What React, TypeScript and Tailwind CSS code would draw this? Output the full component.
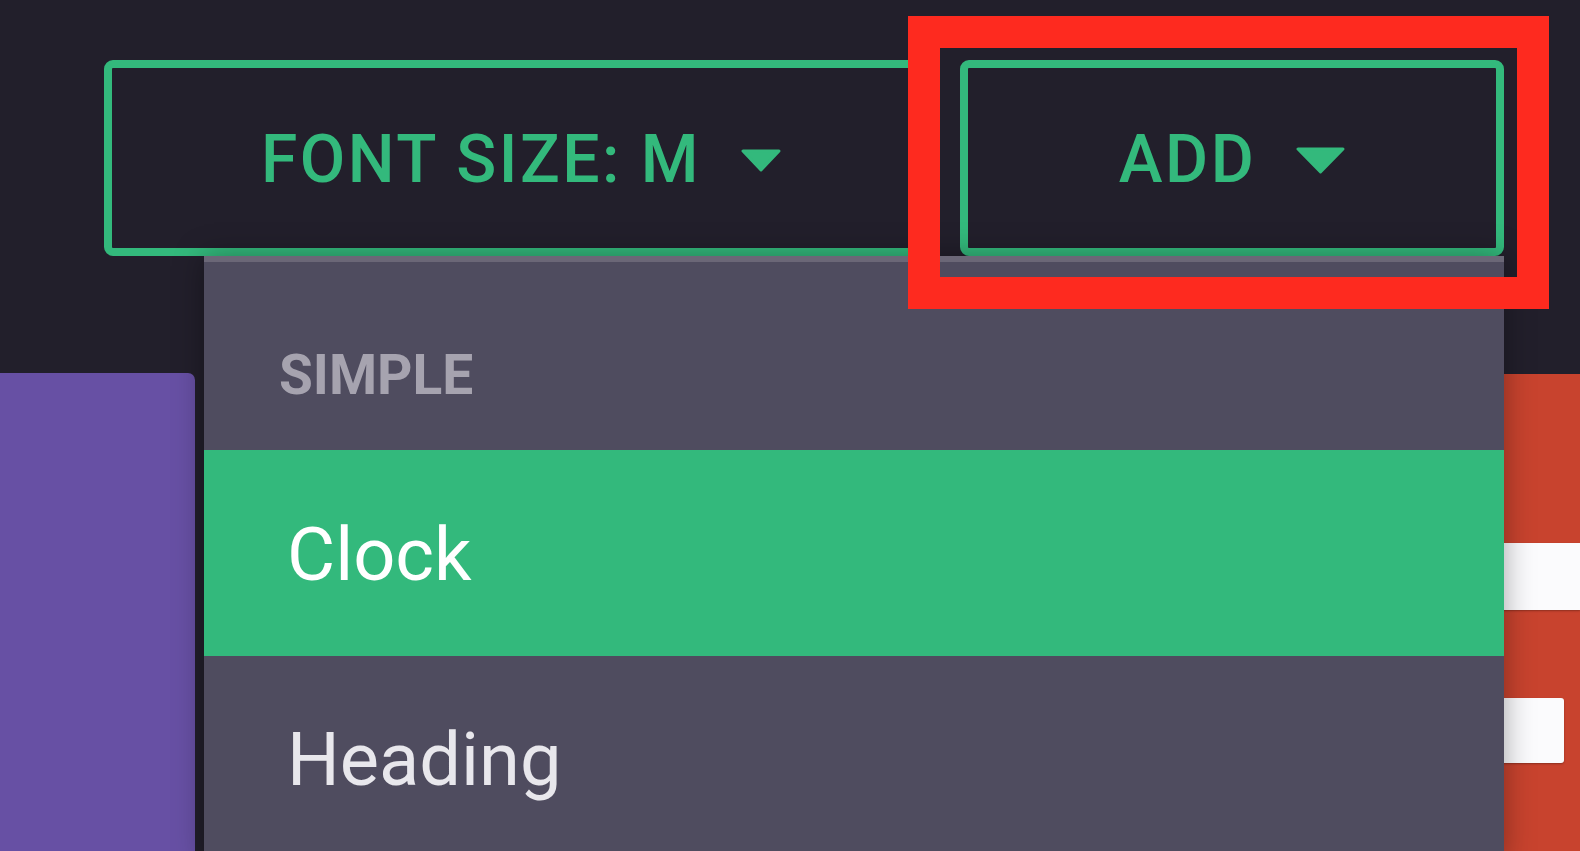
import React from "react";

function Caret({ w, h }: { w: number; h: number }) {
  return (
    <svg width={w} height={h} viewBox={`0 0 ${w} ${h}`} className="shrink-0">
      <polygon
        points={`2,2 ${w - 2},2 ${w / 2},${h - 2}`}
        fill="#33b97c"
        stroke="#33b97c"
        strokeWidth="3"
        strokeLinejoin="round"
      />
    </svg>
  );
}

function ToolbarButton({ label, width, caret }: { label: string; width: string; caret: [number, number] }) {
  return (
    <button
      className={`${width} h-[196px] shrink-0 flex items-center justify-center gap-[40px] pt-[4px] rounded-[9px] border-[8px] border-[#33b97c] bg-[#221f2b] text-[66px] leading-none font-medium tracking-[2.5px] text-[#33b97c]`}
    >
      <span>{label}</span>
      <Caret w={caret[0]} h={caret[1]} />
    </button>
  );
}

export default function App() {
  return (
    <div className="relative w-[1580px] h-[851px] overflow-hidden bg-[#221f2b] [font-family:Roboto,sans-serif]">
      {/* toolbar */}
      <div className="flex gap-[22px] pl-[104px] pt-[60px]">
        <ToolbarButton label="FONT SIZE: M" width="w-[834px]" caret={[40, 23]} />
        <ToolbarButton label="ADD" width="w-[544px]" caret={[49, 27]} />
      </div>

      {/* widgets behind the menu */}
      <div className="flex justify-between mt-[117px]">
        <div className="w-[195px] h-[478px] rounded-tr-[7px] bg-[#6750a4]" />
        <div className="w-[160px] h-[477px] mt-[1px] bg-[#c8432e] flex flex-col">
          <div className="mt-[169px] h-[67px] w-full rounded-l-[4px] bg-[#fbfbfd] shadow-[0_1px_2px_rgba(0,0,0,0.3)]" />
          <div className="mt-[88px] h-[65px] w-[144px] rounded-[3px] bg-[#fbfbfd] shadow-[0_1px_2px_rgba(0,0,0,0.3)]" />
        </div>
      </div>

      {/* add menu */}
      <div className="absolute left-[204px] top-[256px] w-[1300px] bg-[#4f4c5f] shadow-[0_0_28px_rgba(0,0,0,0.35)]">
        <div className="h-[194px] border-t-[6px] border-[#6b6777] pl-[75px] pt-[86px]">
          <div className="text-[55px] leading-none font-bold text-[#a6a3af]">SIMPLE</div>
        </div>
        <div className="h-[206px] flex items-center pl-[83px] pt-[3px] bg-[#33b97c]">
          <span className="text-[74px] leading-none text-white">Clock</span>
        </div>
        <div className="h-[206px] flex items-center pl-[83px] pt-[2px]">
          <span className="text-[74px] leading-none text-[#e8e7ec]">Heading</span>
        </div>
      </div>

      {/* highlight frame */}
      <div className="absolute left-[908px] top-[16px] w-[641px] h-[293px] border-[32px] border-[#fe2a1f]" />
    </div>
  );
}
